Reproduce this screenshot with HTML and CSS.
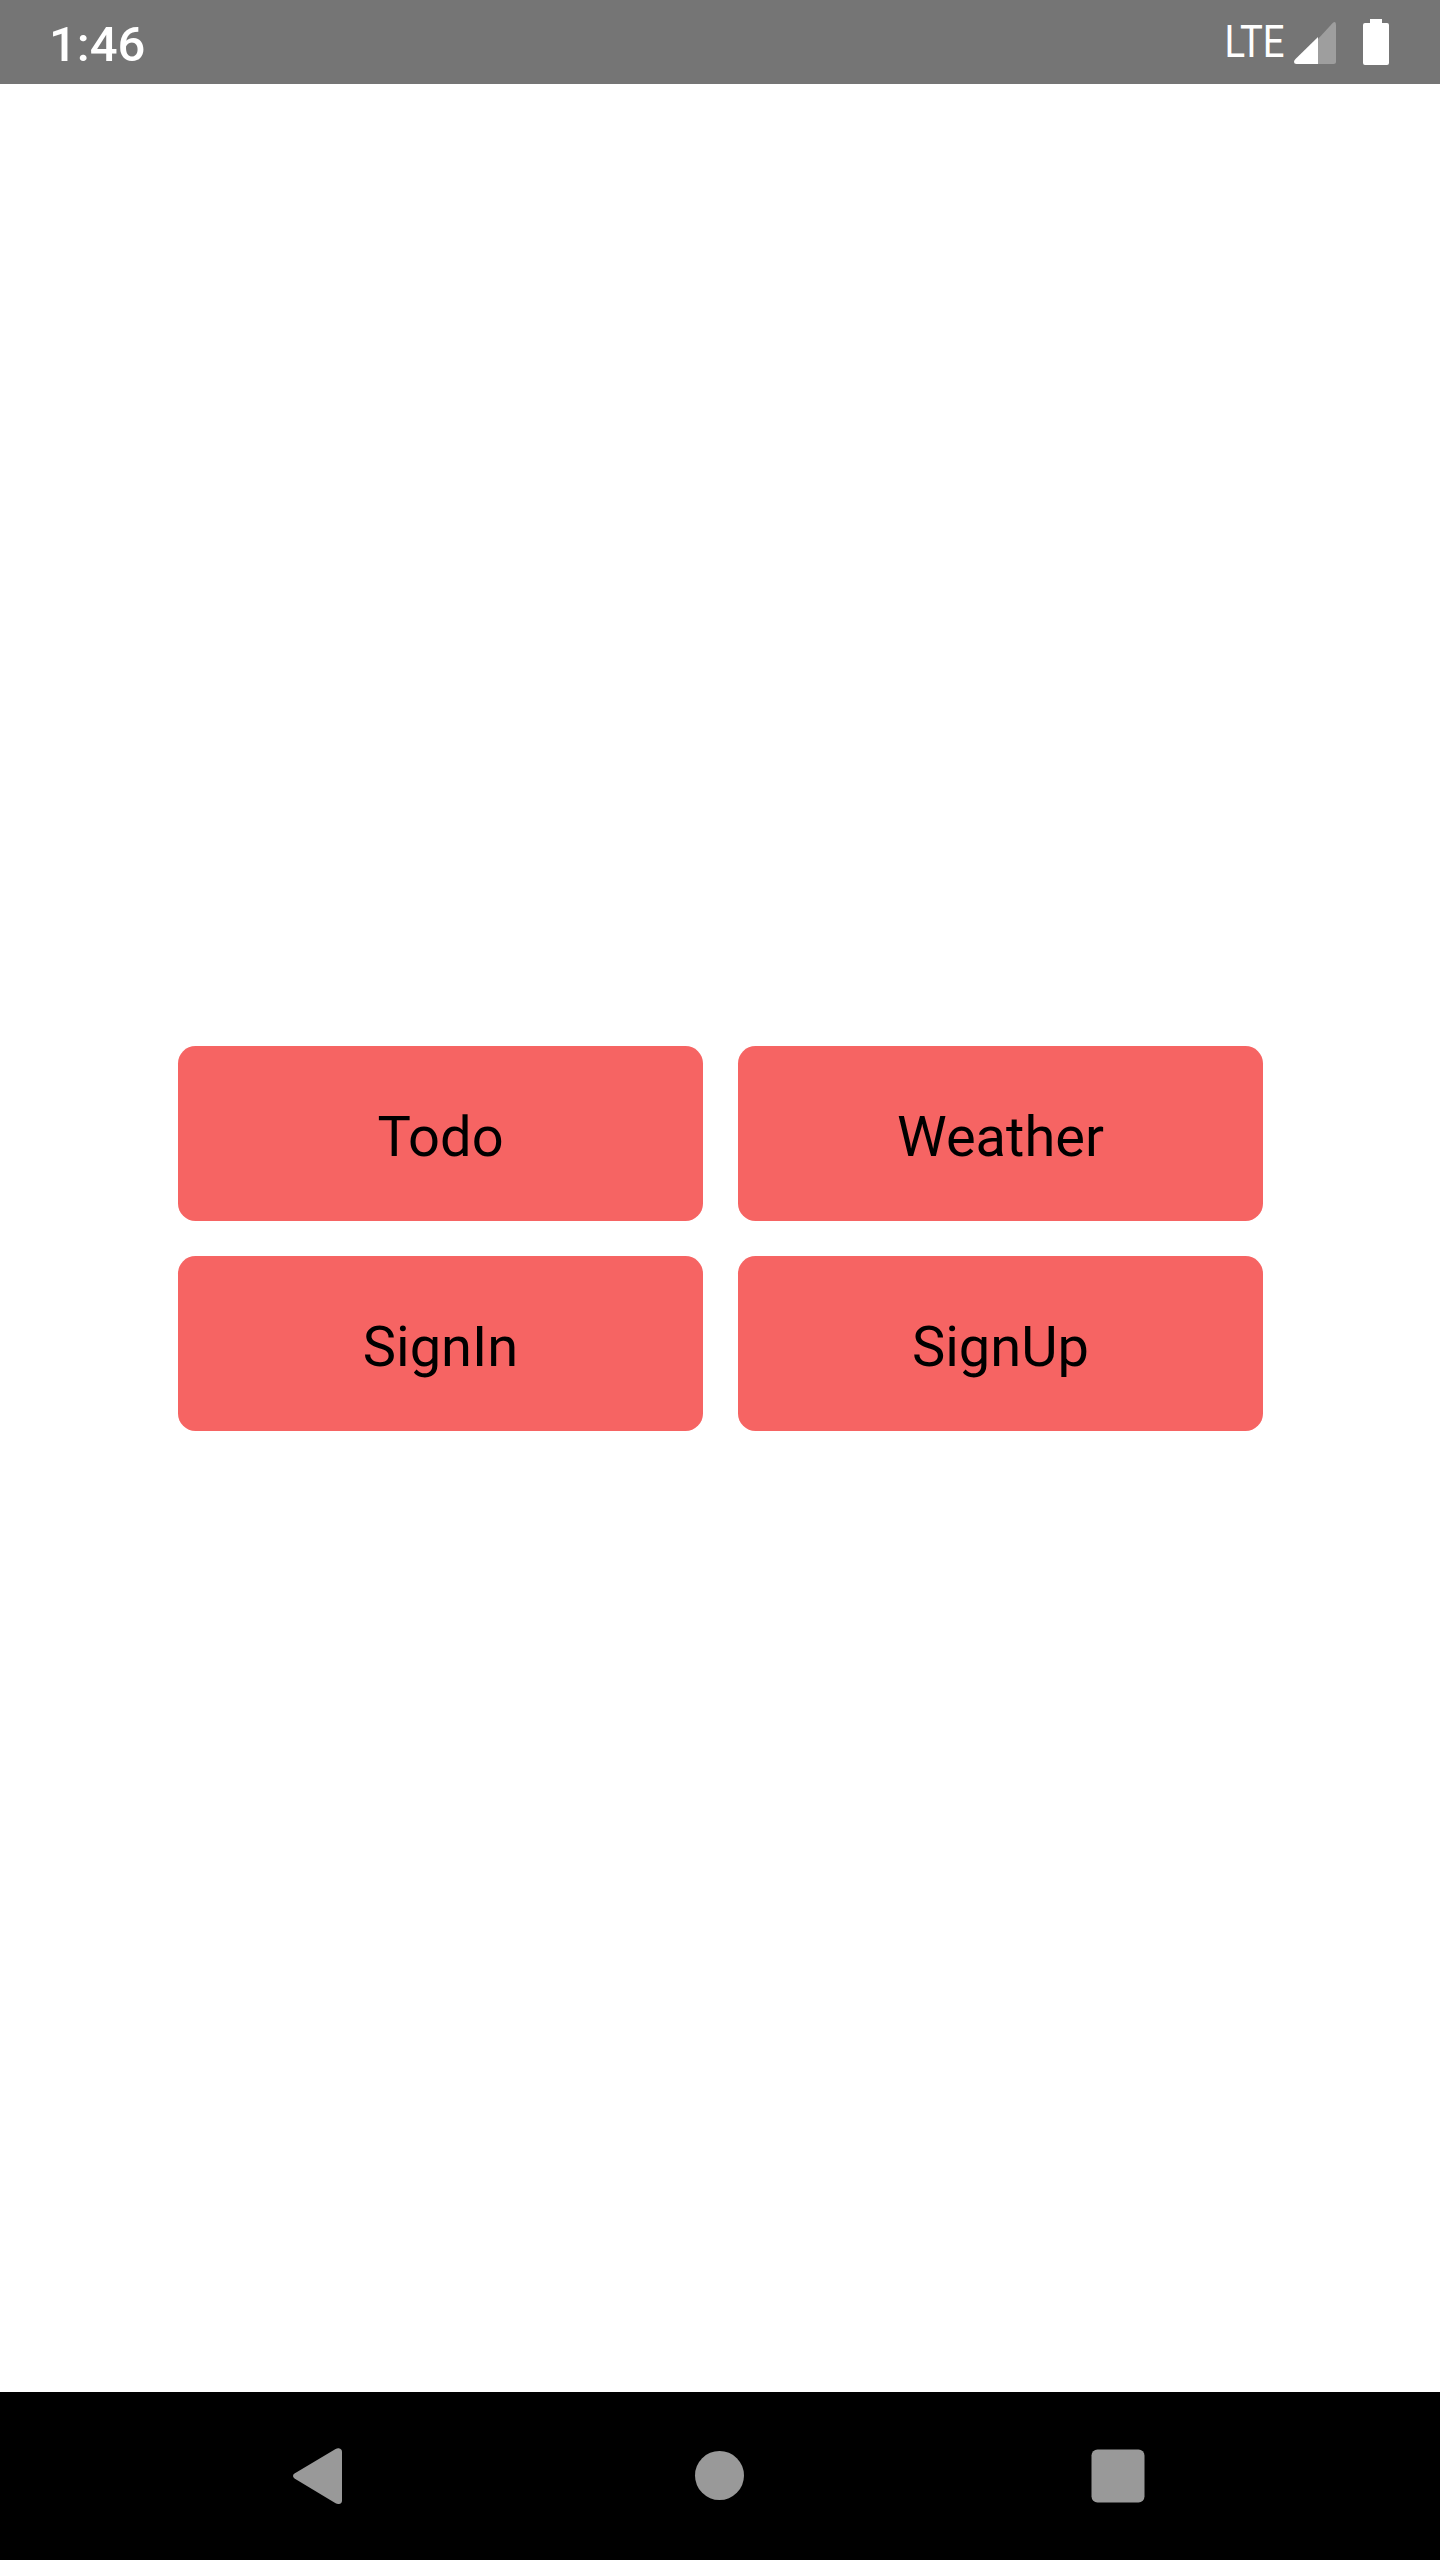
FILE: index.html
```html
<!DOCTYPE html>
<html lang="en">
<head>
<meta charset="utf-8">
<title>Home</title>
<link rel="stylesheet" href="styles.css">
</head>
<body>
<div class="screen">
  <header class="status-bar">
    <span class="clock">1:46</span>
    <svg class="status-icons" width="170" height="84" viewBox="0 0 170 84" role="img" aria-label="LTE signal and battery">
      <text class="network" x="24.5" y="57" textLength="60" lengthAdjust="spacingAndGlyphs">LTE</text>
      <path fill="#9e9e9e" d="M118 39 L132.7 23 Q136 20.5 136 25 V61.500 Q136 64 133.500 64 H118 Z"/>
      <path fill="#fff" d="M118 37 V64 H96.500 Q94 64 94 61.500 Q94 60.500 95.500 59 Z"/>
      <path fill="#fff" d="M170 19 H182 V23 H187 Q189 23 189 25 V63 Q189 65 187 65 H165 Q163 65 163 63 V25 Q163 23 165 23 H170 Z"/>
    </svg>
  </header>
  <main class="content">
    <nav class="menu">
      <a class="menu-item">Todo</a>
      <a class="menu-item">Weather</a>
      <a class="menu-item">SignIn</a>
      <a class="menu-item">SignUp</a>
    </nav>
  </main>
  <footer class="nav-bar">
    <svg class="nav-icon" width="54" height="57" viewBox="0 0 54 57"><path d="M1.500 25.600 L42.600 0.900 Q44.200 0 45.800 0.200 Q49 0.600 49 4 V52.400 Q49 55.600 45.800 56 Q44.200 56.200 42.600 55.300 L1.500 30.400 Q0 29.400 0 28 Q0 26.600 1.500 25.600 Z"/></svg>
    <svg class="nav-icon" width="50" height="50" viewBox="0 0 50 50"><circle cx="25.500" cy="24.500" r="24.500"/></svg>
    <svg class="nav-icon" width="54" height="54" viewBox="0 0 54 54"><rect x="0.500" y="0.500" width="53" height="53" rx="6"/></svg>
  </footer>
</div>
</body>
</html>
```
FILE: styles.css
```css
body {
  margin: 0;
  font-family: Roboto, sans-serif;
}

.screen {
  display: flex;
  flex-direction: column;
  width: 1440px;
  height: 2560px;
  background: #fff;
}

.status-bar {
  display: flex;
  justify-content: space-between;
  box-sizing: border-box;
  height: 84px;
  padding: 0 70px 0 49px;
  background: #757575;
  color: #fff;
}

.clock {
  font-size: 49px;
  font-weight: 500;
  line-height: 90px;
}

.status-icons {
  display: block;
  overflow: visible;
}

.network {
  fill: #fff;
  font-size: 44px;
}

.content {
  flex: 1;
  display: flex;
  align-items: center;
  justify-content: center;
}

.menu {
  display: grid;
  grid-template-columns: 525px 525px;
  grid-auto-rows: 175px;
  gap: 35px;
  padding-left: 1px;
}

.menu-item {
  display: flex;
  align-items: center;
  justify-content: center;
  box-sizing: border-box;
  padding-top: 7px;
  border-radius: 17.5px;
  background: #f66463;
  color: #000;
  font-size: 56px;
}

.nav-bar {
  display: flex;
  align-items: center;
  justify-content: space-between;
  box-sizing: border-box;
  height: 168px;
  padding: 0 295px 0 293px;
  background: #000;
}

.nav-icon {
  fill: #999;
}
```
